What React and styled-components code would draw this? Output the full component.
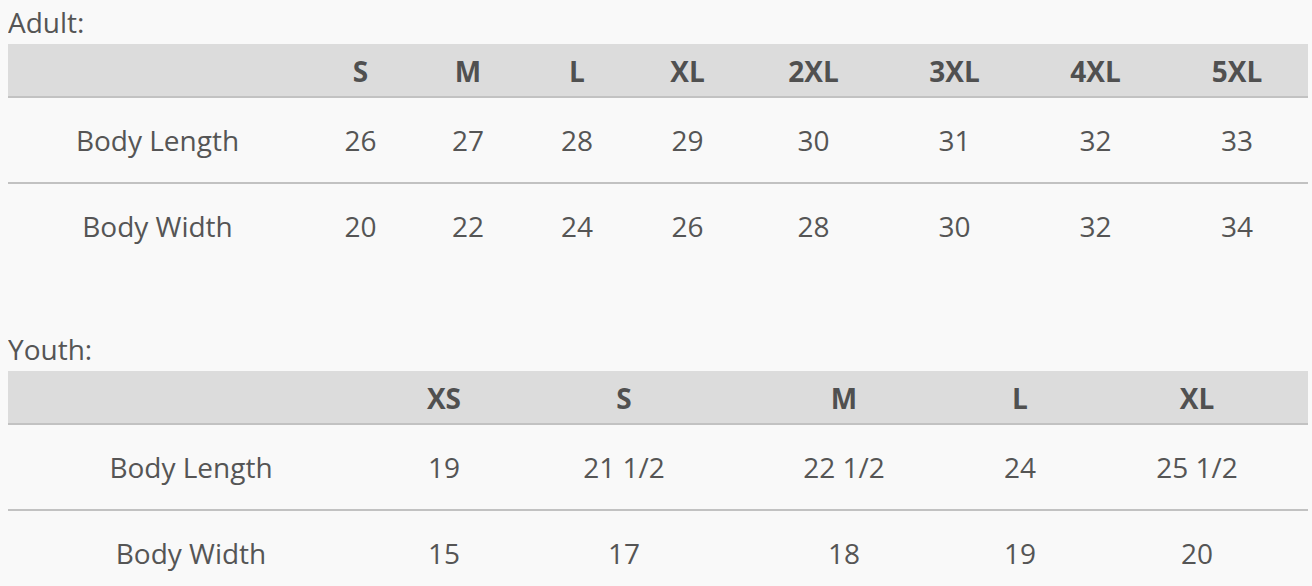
import React from 'react';
import styled, { createGlobalStyle } from 'styled-components';

const GlobalStyle = createGlobalStyle`
  body {
    margin: 8px 4px 8px 8px;
    background: #f9f9f9;
    font-family: "Open Sans", "Noto Sans", sans-serif;
    color: #555555;
  }
`;

const Section = styled.section`
  margin-bottom: ${(p) => p.gap || 0}px;
`;

const Caption = styled.div`
  font-size: 28px;
  line-height: 28px;
  margin-bottom: 8px;
  color: #555555;
`;

const Table = styled.table`
  width: 100%;
  table-layout: fixed;
  border-collapse: collapse;
  font-size: 28px;
  line-height: 36px;
`;

const Col = styled.col`
  width: ${(p) => p.$w}px;
`;

const HeadCell = styled.th`
  background: #dcdcdc;
  font-weight: 700;
  color: #505050;
  padding: 9px 0 7px;
  border-bottom: 2px solid #c2c2c2;
  text-align: center;
`;

const Row = styled.tr`
  & + & td {
    border-top: 2px solid #c2c2c2;
  }
`;

const Cell = styled.td`
  padding: 24px 0;
  text-align: center;
  white-space: nowrap;
`;

const adult = {
  widths: [299, 107, 108, 110, 111, 141, 141, 141, 142],
  sizes: ['S', 'M', 'L', 'XL', '2XL', '3XL', '4XL', '5XL'],
  rows: [
    ['Body Length', '26', '27', '28', '29', '30', '31', '32', '33'],
    ['Body Width', '20', '22', '24', '26', '28', '30', '32', '34'],
  ],
};

const youth = {
  widths: [366, 140, 220, 220, 132, 222],
  sizes: ['XS', 'S', 'M', 'L', 'XL'],
  rows: [
    ['Body Length', '19', '21 1/2', '22 1/2', '24', '25 1/2'],
    ['Body Width', '15', '17', '18', '19', '20'],
  ],
};

const SizeTable = ({ title, data, gap }) => (
  <Section gap={gap}>
    <Caption>{title}</Caption>
    <Table>
      <colgroup>
        {data.widths.map((w, i) => (
          <Col key={i} $w={w} />
        ))}
      </colgroup>
      <thead>
        <tr>
          <HeadCell />
          {data.sizes.map((s) => (
            <HeadCell key={s}>{s}</HeadCell>
          ))}
        </tr>
      </thead>
      <tbody>
        {data.rows.map((r) => (
          <Row key={r[0]}>
            {r.map((v, i) => (
              <Cell key={i}>{v}</Cell>
            ))}
          </Row>
        ))}
      </tbody>
    </Table>
  </Section>
);

export default function App() {
  return (
    <>
      <GlobalStyle />
      <SizeTable title="Adult:" data={adult} gap={67} />
      <SizeTable title="Youth:" data={youth} />
    </>
  );
}
